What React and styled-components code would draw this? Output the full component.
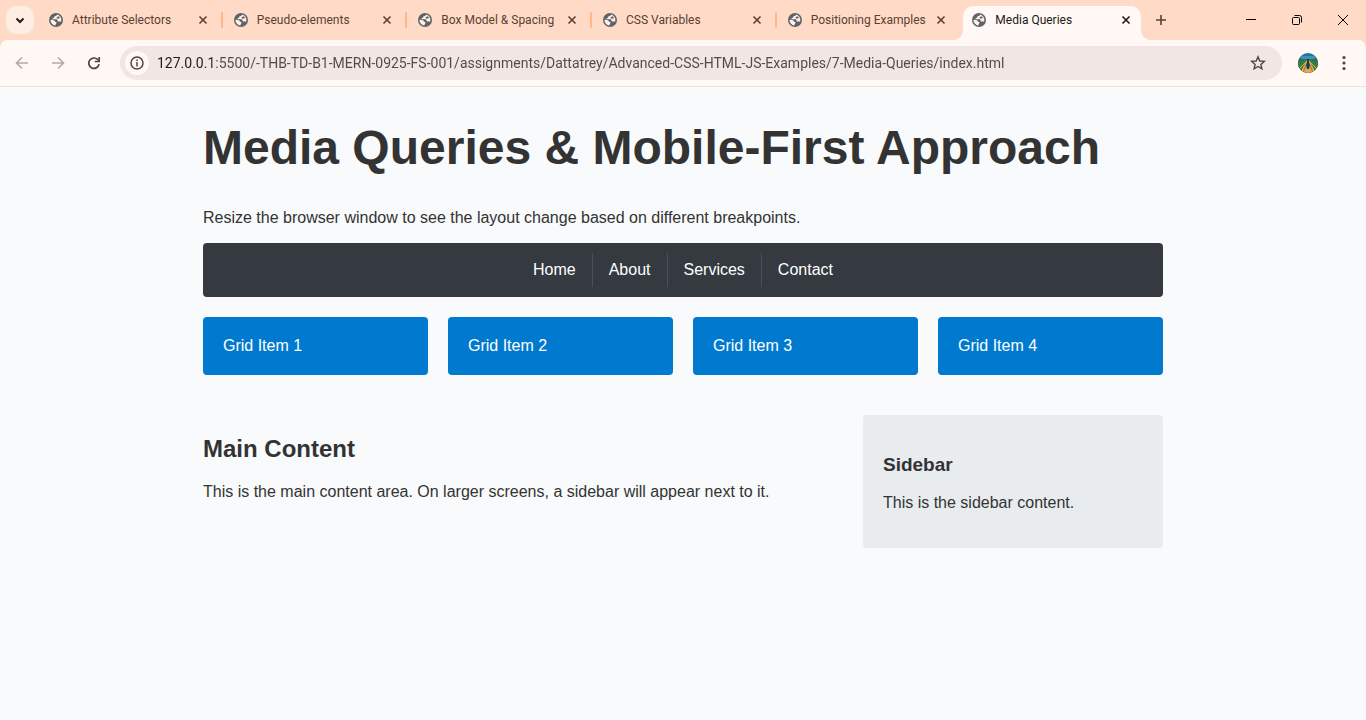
import React from "react";
import styled, { createGlobalStyle, css } from "styled-components";

const GlobalStyle = createGlobalStyle`
  *, *::before, *::after { box-sizing: border-box; }
  html { background: #f8fafc; }
  body {
    margin: 0;
    color: #333333;
    font-family: Arial, "Liberation Sans", sans-serif;
    font-size: 16px;
  }
  button, input { font: inherit; color: inherit; }
`;

const uiFont = css`
  font-family: "Segoe UI", Roboto, "Noto Sans", sans-serif;
`;

/* ---------- Browser frame ---------- */

const BrowserFrame = styled.header`
  ${uiFont}
  background: #ffdbc7;
`;

const TabStrip = styled.div`
  display: flex;
  align-items: center;
  height: 40px;
  padding-left: 6px;
`;

const IconButton = styled.button`
  display: flex;
  align-items: center;
  justify-content: center;
  flex: none;
  width: ${(p) => p.$width || 28}px;
  height: ${(p) => p.$height || 28}px;
  padding: 0;
  border: 0;
  border-radius: ${(p) => p.$radius || 0}px;
  background: ${(p) => p.$background || "transparent"};
  color: ${(p) => p.$color || "#55433a"};
`;

const TabList = styled.div`
  display: flex;
  align-items: center;
  flex: 0 1 1101px;
  min-width: 0;
  margin: 0 6px;
`;

const Tab = styled.div`
  position: relative;
  display: flex;
  align-items: center;
  flex: 1 1 0;
  min-width: 0;
  height: 34px;
  margin-top: 6px;
  padding: 0 7px 6px 8px;
  color: #5a4032;

  ${(p) =>
    p.$active &&
    css`
      color: #221a16;
      background: #fff8f5;
      border-radius: 10px 10px 0 0;

      &::before,
      &::after {
        content: "";
        position: absolute;
        bottom: 0;
        width: 10px;
        height: 10px;
      }
      &::before {
        right: 100%;
        background: radial-gradient(circle at 0 0, transparent 10px, #fff8f5 10px);
      }
      &::after {
        left: 100%;
        background: radial-gradient(circle at 100% 0, transparent 10px, #fff8f5 10px);
      }
    `}
`;

const TabLabel = styled.button`
  display: flex;
  align-items: center;
  gap: 8px;
  flex: 1;
  min-width: 0;
  padding: 0;
  border: 0;
  background: transparent;
  font-size: 12px;
  line-height: 16px;
  text-align: left;
  white-space: nowrap;
`;

const TabDivider = styled.span`
  flex: none;
  width: 2px;
  height: 16px;
  margin: 0 2px 0 3px;
  border-radius: 1px;
  background: ${(p) => (p.$hidden ? "transparent" : "#ffb787")};
`;

const WindowControls = styled.div`
  display: flex;
  margin-left: auto;
`;

const Toolbar = styled.div`
  display: flex;
  align-items: center;
  gap: 8px;
  height: 47px;
  padding: 0 8px;
  border-bottom: 1px solid #fadfd0;
  border-radius: 8px 8px 0 0;
  background: #fff8f5;
`;

const AddressBar = styled.div`
  display: flex;
  align-items: center;
  gap: 8px;
  flex: 1;
  min-width: 0;
  height: 34px;
  margin: 0 4px;
  padding: 0 10px 0 5px;
  border-radius: 17px;
  background: #f1e6e3;
`;

const AddressInput = styled.input`
  flex: 1;
  min-width: 0;
  padding: 0;
  border: 0;
  outline: 0;
  font-size: 14px;
  line-height: 20px;
  color: transparent;
  background: linear-gradient(to right, #221a16 55px, #56473f 55px);
  background-clip: text;
`;

/* ---------- Page ---------- */

const Page = styled.main`
  max-width: 960px;
  margin: 0 auto;
  padding-top: 33px;
`;

const Title = styled.h1`
  margin: 0 0 33px;
  font-size: 48px;
  line-height: 56px;
`;

const Text = styled.p`
  margin: 0 0 16px;
  line-height: 18px;
`;

const Nav = styled.nav`
  margin-bottom: 20px;
  padding: 10px;
  border-radius: 4px;
  background: #343a40;
`;

const NavList = styled.ul`
  display: flex;
  justify-content: center;
  margin: 0;
  padding: 0;
  list-style: none;
`;

const NavItem = styled.li`
  & + & { border-left: 1px solid #495057; }
`;

const NavLink = styled.a`
  display: block;
  padding: 8px 16px;
  color: #ffffff;
  line-height: 18px;
  text-decoration: none;
`;

const Grid = styled.section`
  display: grid;
  grid-template-columns: repeat(4, 1fr);
  gap: 20px;
  margin-bottom: 40px;
`;

const GridItem = styled.div`
  padding: 20px;
  border-radius: 4px;
  background: #007acf;
  color: #ffffff;
  line-height: 18px;
`;

const Columns = styled.div`
  display: grid;
  grid-template-columns: 1fr 300px;
  gap: 20px;
`;

const Content = styled.article`
  padding-top: 20px;
`;

const ContentTitle = styled.h2`
  margin: 0 0 20px;
  font-size: 24px;
  line-height: 28px;
`;

const Sidebar = styled.aside`
  padding: 39px 20px 20px;
  border-radius: 4px;
  background: #e8ecef;
`;

const SidebarTitle = styled.h3`
  margin: 0 0 18px;
  font-size: 19px;
  line-height: 22px;
`;

/* ---------- Icons ---------- */

const Stroke = ({ width = 2, children }) => (
  <svg
    width="16"
    height="16"
    viewBox="0 0 16 16"
    fill="none"
    stroke="currentColor"
    strokeWidth={width}
    aria-hidden="true"
  >
    {children}
  </svg>
);

const Globe = () => (
  <svg width="16" height="16" viewBox="0 0 16 16" aria-hidden="true">
    <circle cx="8" cy="8" r="7" fill="#5f6368" />
    <path
      d="M9.1 2.500c-.2 1-.7 1.300-1.700 1.400-.9.100-1.200.5-1.200 1.200 0 .8-.6 1.100-1.400 1.200-.5.1-.5.900.1 1h3.200c1 0 1.500.6 1.500 1.400 0 .600.500.9 1.200.900h2.400A5.600 5.600 0 0 0 9.100 2.500Z"
      fill="#fff1e8"
    />
    <path
      d="M2.500 7.900c1.200-.2 2.700-.1 3.700.6.800.600.7 1.300 1.700 1.500.8.2.9.7.5 1.300-.4.500-.9.800-.9 2.200A5.600 5.600 0 0 1 2.500 7.900Z"
      fill="#fff1e8"
    />
    <path d="M9.500 4.700c1.300-.3 2.400.2 2.200 1.100-.2 1-2.300 1-2.900.500-.5-.5-.1-1.300.7-1.600Z" fill="#5f6368" />
  </svg>
);

const Cross = () => (
  <Stroke width={1.6}>
    <path d="M4.500 4.500l7 7M11.500 4.500l-7 7" />
  </Stroke>
);

const Avatar = () => (
  <svg width="20" height="20" viewBox="0 0 20 20" aria-hidden="true">
    <defs>
      <clipPath id="avatar-clip">
        <circle cx="10" cy="10" r="10" />
      </clipPath>
    </defs>
    <g clipPath="url(#avatar-clip)">
      <path fill="#2374a3" d="M0 0h20v20H0z" />
      <path fill="#3f93ad" d="M3 3h14v3H3z" />
      <path fill="#2f6b5c" d="M0 5l5 1 4 1h2l4-1 5-1v15H0z" />
      <path fill="#3d7d3a" d="M0 10l8-3h4l8 3v10H0z" />
      <path fill="#e8a44f" d="M9 7h2l7 13H2z" />
      <path stroke="#c9b94a" d="M9 8L1 16M11 8l8 8" />
      <path stroke="#8f7b38" d="M8 12l-3 8M12 12l3 8" />
      <path fill="#183d58" d="M9 6h2v3l1 3-1 4H9l-1-4 1-3z" />
    </g>
  </svg>
);

const tabs = [
  "Attribute Selectors",
  "Pseudo-elements",
  "Box Model & Spacing",
  "CSS Variables",
  "Positioning Examples",
  "Media Queries",
];

const gridItems = ["Grid Item 1", "Grid Item 2", "Grid Item 3", "Grid Item 4"];
const links = ["Home", "About", "Services", "Contact"];

export default function App() {
  const active = tabs.length - 1;
  return (
    <>
      <GlobalStyle />
      <BrowserFrame>
        <TabStrip>
          <IconButton $radius={10} $background="#ffede4" $color="#221a16" aria-label="Search tabs">
            <Stroke>
              <path d="M4.500 6.500L8 10l3.500-3.500" />
            </Stroke>
          </IconButton>
          <TabList>
            {tabs.map((tab, i) => (
              <React.Fragment key={tab}>
                {i > 0 && <TabDivider $hidden={i === active} />}
                <Tab $active={i === active}>
                  <TabLabel>
                    <Globe />
                    {tab}
                  </TabLabel>
                  <IconButton
                    $width={16}
                    $height={16}
                    $color={i === active ? "#221a16" : "#5a4032"}
                    aria-label={`Close ${tab}`}
                  >
                    <Cross />
                  </IconButton>
                </Tab>
              </React.Fragment>
            ))}
          </TabList>
          <IconButton aria-label="New tab">
            <Stroke width={1.6}>
              <path d="M8 3v10M3 8h10" />
            </Stroke>
          </IconButton>
          <WindowControls>
            <IconButton $width={46} $height={40} $color="#000000" aria-label="Minimize">
              <Stroke width={1}>
                <path d="M3 7.500h10" />
              </Stroke>
            </IconButton>
            <IconButton $width={46} $height={40} $color="#000000" aria-label="Restore">
              <Stroke width={1}>
                <rect x="3.500" y="5.500" width="7" height="7" rx="1" />
                <path d="M5.500 3.500h5a2 2 0 0 1 2 2v5" />
              </Stroke>
            </IconButton>
            <IconButton $width={46} $height={40} $color="#000000" aria-label="Close window">
              <Stroke width={1}>
                <path d="M3 3l10 10M13 3L3 13" />
              </Stroke>
            </IconButton>
          </WindowControls>
        </TabStrip>
        <Toolbar>
          <IconButton $color="#b5a9a4" aria-label="Back">
            <Stroke width={1.6}>
              <path d="M14 8H3M8 2.500L2.500 8 8 13.500" />
            </Stroke>
          </IconButton>
          <IconButton $color="#b5a9a4" aria-label="Forward">
            <Stroke width={1.6}>
              <path d="M2 8h11M8 2.500L13.500 8 8 13.500" />
            </Stroke>
          </IconButton>
          <IconButton aria-label="Reload">
            <Stroke width={1.7}>
              <path d="M12.300 5.300A5.200 5.200 0 1 0 13.100 9.200" />
              <path d="M13.200 2v4.500H8.700" />
            </Stroke>
          </IconButton>
          <AddressBar>
            <IconButton
              $width={24}
              $height={24}
              $radius={12}
              $background="#fff8f5"
              aria-label="View site information"
            >
              <Stroke width={1.5}>
                <circle cx="8" cy="8" r="6" />
                <path d="M8 7v4.500M8 4.500v1.500" />
              </Stroke>
            </IconButton>
            <AddressInput
              aria-label="Address"
              defaultValue="127.0.0.1:5500/-THB-TD-B1-MERN-0925-FS-001/assignments/Dattatrey/Advanced-CSS-HTML-JS-Examples/7-Media-Queries/index.html"
            />
            <IconButton aria-label="Bookmark this tab">
              <Stroke width={1.4}>
                <path d="M8 1.800l1.800 4.200 4.500.400-3.400 3 1 4.400L8 11.500l-3.900 2.300 1-4.400-3.400-3 4.500-.4z" />
              </Stroke>
            </IconButton>
          </AddressBar>
          <IconButton aria-label="Profile">
            <Avatar />
          </IconButton>
          <IconButton aria-label="Browser menu">
            <svg width="16" height="16" viewBox="0 0 16 16" fill="currentColor" aria-hidden="true">
              <circle cx="8" cy="2.500" r="1.600" />
              <circle cx="8" cy="8" r="1.600" />
              <circle cx="8" cy="13.500" r="1.600" />
            </svg>
          </IconButton>
        </Toolbar>
      </BrowserFrame>
      <Page>
        <Title>Media Queries &amp; Mobile-First Approach</Title>
        <Text>Resize the browser window to see the layout change based on different breakpoints.</Text>
        <Nav>
          <NavList>
            {links.map((link) => (
              <NavItem key={link}>
                <NavLink href={`#${link.toLowerCase()}`}>{link}</NavLink>
              </NavItem>
            ))}
          </NavList>
        </Nav>
        <Grid>
          {gridItems.map((item) => (
            <GridItem key={item}>{item}</GridItem>
          ))}
        </Grid>
        <Columns>
          <Content>
            <ContentTitle>Main Content</ContentTitle>
            <Text>This is the main content area. On larger screens, a sidebar will appear next to it.</Text>
          </Content>
          <Sidebar>
            <SidebarTitle>Sidebar</SidebarTitle>
            <Text>This is the sidebar content.</Text>
          </Sidebar>
        </Columns>
      </Page>
    </>
  );
}
